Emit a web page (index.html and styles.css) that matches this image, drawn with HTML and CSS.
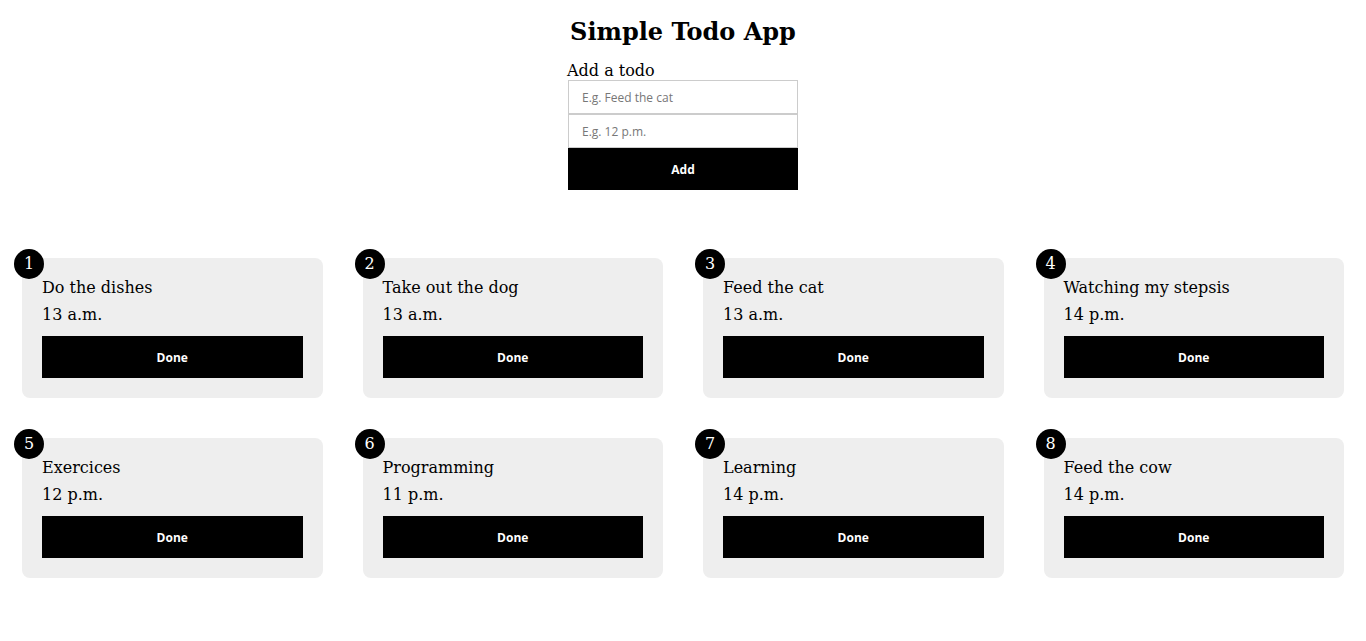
FILE: index.html
```html
<!DOCTYPE html>
<html>
<head>
<meta charset="utf-8">
<title>Simple Todo App</title>
<link rel="stylesheet" href="styles.css">
</head>
<body>
<header class="top">
  <h1 class="title">Simple Todo App</h1>
  <form class="add-form">
    <label class="add-label">Add a todo</label>
    <input class="field" type="text" placeholder="E.g. Feed the cat">
    <input class="field field-second" type="text" placeholder="E.g. 12 p.m.">
    <button class="btn add-btn" type="button">Add</button>
  </form>
</header>
<main class="grid">
  <div class="card"><span class="badge">1</span><p class="name">Do the dishes</p><p class="time">13 a.m.</p><button class="btn done">Done</button></div>
  <div class="card"><span class="badge">2</span><p class="name">Take out the dog</p><p class="time">13 a.m.</p><button class="btn done">Done</button></div>
  <div class="card"><span class="badge">3</span><p class="name">Feed the cat</p><p class="time">13 a.m.</p><button class="btn done">Done</button></div>
  <div class="card"><span class="badge">4</span><p class="name">Watching my stepsis</p><p class="time">14 p.m.</p><button class="btn done">Done</button></div>
  <div class="card"><span class="badge">5</span><p class="name">Exercices</p><p class="time">12 p.m.</p><button class="btn done">Done</button></div>
  <div class="card"><span class="badge">6</span><p class="name">Programming</p><p class="time">11 p.m.</p><button class="btn done">Done</button></div>
  <div class="card"><span class="badge">7</span><p class="name">Learning</p><p class="time">14 p.m.</p><button class="btn done">Done</button></div>
  <div class="card"><span class="badge">8</span><p class="name">Feed the cow</p><p class="time">14 p.m.</p><button class="btn done">Done</button></div>
</main>
</body>
</html>
```

FILE: styles.css
```css
html, body {
  margin: 0;
  padding: 0;
  background: #fff;
  color: #000;
  font-family: "DejaVu Serif", serif;
  font-size: 16px;
}

.top {
  display: flex;
  flex-direction: column;
  align-items: center;
  padding-top: 17px;
}

.title {
  margin: 0;
  font-size: 24px;
  line-height: 30px;
  font-weight: bold;
}

.add-form {
  width: 230px;
  display: flex;
  flex-direction: column;
  margin-top: 14px;
}

.add-label {
  display: block;
  line-height: 19px;
  margin-left: -1px;
}

.field {
  box-sizing: border-box;
  height: 34px;
  width: 230px;
  margin: 0;
  border: 1px solid #ccc;
  padding: 0 13px;
  font-family: "Open Sans", "DejaVu Sans", sans-serif;
  font-size: 12px;
  color: #333;
  outline: none;
}

.field::placeholder {
  color: #777;
}

.btn {
  border: none;
  background: #000;
  color: #fff;
  font-family: "Open Sans", "DejaVu Sans", sans-serif;
  font-weight: bold;
  font-size: 12px;
  cursor: pointer;
  margin: 0;
  padding: 0;
}

.add-btn {
  height: 42px;
  width: 230px;
}

.grid {
  display: grid;
  grid-template-columns: repeat(4, 1fr);
  column-gap: 40px;
  row-gap: 40px;
  padding: 0 22px;
  margin-top: 68px;
}

.card {
  position: relative;
  background: #eee;
  border-radius: 8px;
  padding: 20px;
  height: 140px;
  box-sizing: border-box;
  display: flex;
  flex-direction: column;
}

.badge {
  position: absolute;
  left: -8px;
  top: -9px;
  width: 30px;
  height: 30px;
  border-radius: 50%;
  background: #000;
  color: #fff;
  display: flex;
  align-items: center;
  justify-content: center;
  font-size: 16px;
  line-height: 1;
}

.name,
.time {
  margin: 0;
  line-height: 19px;
}

.name {
  margin-bottom: 8px;
}

.time {
  margin-bottom: 12px;
}

.done {
  height: 42px;
  width: 100%;
}
```
